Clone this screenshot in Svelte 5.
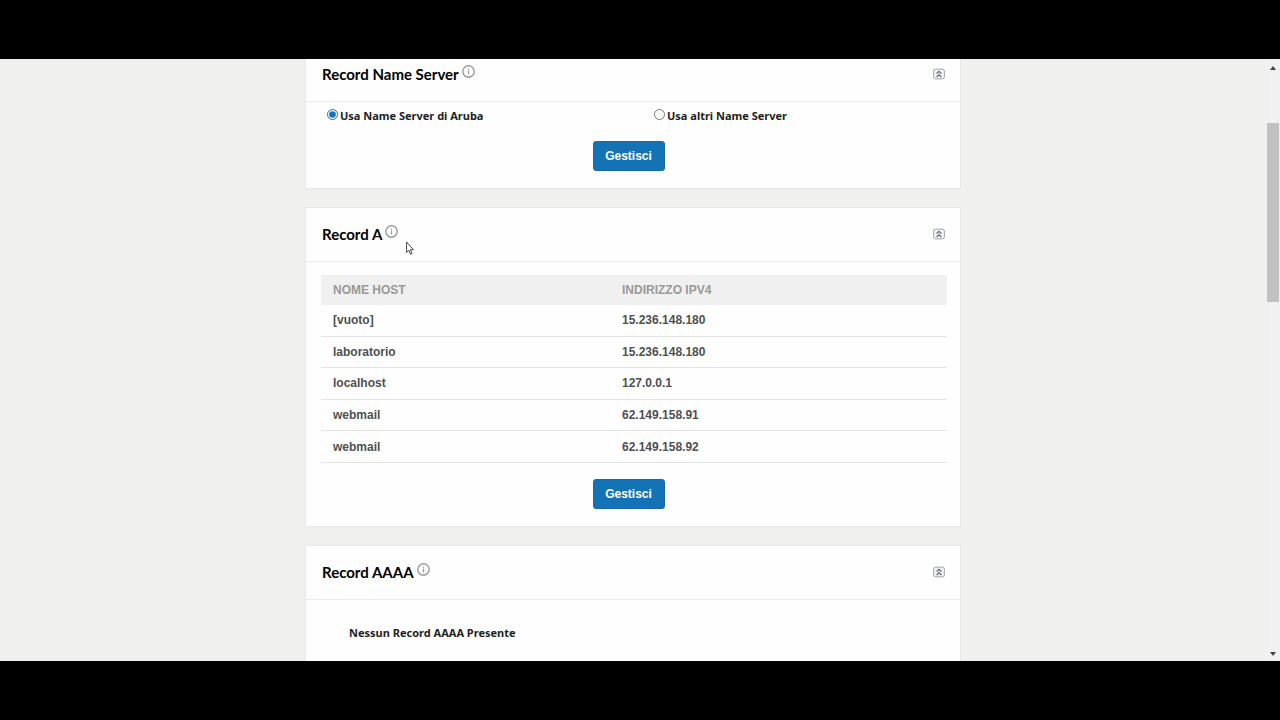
<script lang="ts">
  let nameServer = $state('aruba');

  const columns = ['NOME HOST', 'INDIRIZZO IPV4'];

  const records = [
    { host: '[vuoto]', ip: '15.236.148.180' },
    { host: 'laboratorio', ip: '15.236.148.180' },
    { host: 'localhost', ip: '127.0.0.1' },
    { host: 'webmail', ip: '62.149.158.91' },
    { host: 'webmail', ip: '62.149.158.92' },
  ];
</script>

{#snippet header(title: string)}
  <header class="card-header">
    <h2>{title}</h2>
    <button type="button" class="icon-button info" aria-label="Informazioni">
      <svg width="13" height="13" viewBox="0 0 13 13" fill="none" stroke="#999">
        <circle cx="6.5" cy="6.5" r="5.7" stroke-width="1.4" />
        <path d="M6.5 5.6V9.4M6.5 3.4V4.7" stroke-width="1.2" />
      </svg>
    </button>
    <button type="button" class="icon-button collapse" aria-label="Chiudi sezione">
      <svg width="12" height="12" viewBox="0 0 12 12" fill="none">
        <rect x="0.6" y="1.1" width="10.8" height="9.8" rx="2" fill="#f0f2f4" stroke="#a3a7ac" />
        <path d="M3.6 5.6L6 3.4L8.4 5.6M3.6 8.9L6 6.7L8.4 8.9" stroke="#70757b" stroke-width="1.4" />
      </svg>
    </button>
  </header>
{/snippet}

<div class="stage">
  <div class="screen">
    <main>
      <section class="card">
        {@render header('Record Name Server')}
        <div class="choices">
          <label><input type="radio" name="ns" value="aruba" bind:group={nameServer} />Usa Name Server di Aruba</label>
          <label><input type="radio" name="ns" value="altri" bind:group={nameServer} />Usa altri Name Server</label>
        </div>
        <div class="actions"><button type="button" class="primary">Gestisci</button></div>
      </section>

      <section class="card">
        {@render header('Record A')}
        <div class="table-wrap">
          <table>
            <thead>
              <tr>
                {#each columns as column}
                  <th>{column}</th>
                {/each}
              </tr>
            </thead>
            <tbody>
              {#each records as record}
                <tr>
                  <td>{record.host}</td>
                  <td>{record.ip}</td>
                </tr>
              {/each}
            </tbody>
          </table>
        </div>
        <div class="actions"><button type="button" class="primary">Gestisci</button></div>
      </section>

      <section class="card">
        {@render header('Record AAAA')}
        <p class="empty">Nessun Record AAAA Presente</p>
      </section>
    </main>

    <div class="scrollbar" aria-hidden="true">
      <svg width="6" height="4" viewBox="0 0 6 4"><path d="M0 4L3 0L6 4Z" fill="#444" /></svg>
      <div class="track"><div class="thumb"></div></div>
      <svg width="6" height="4" viewBox="0 0 6 4"><path d="M0 0L3 4L6 0Z" fill="#444" /></svg>
    </div>

    <svg class="cursor" width="8" height="14" viewBox="0 0 8 14" aria-hidden="true">
      <path d="M0.6 1V11.4L2.8 9.3L4.5 13.2L6 12.5L4.4 8.7H7.4Z" fill="#fff" stroke="#333" stroke-width="0.9" />
    </svg>
  </div>
</div>

<style>
  :global(body) { margin: 0; background: #000; }

  .stage { box-sizing: border-box; height: 100vh; padding: 59px 0; background: #000; }
  .screen { position: relative; display: flex; height: 100%; overflow: hidden; background: #f0f0ee; }

  main { flex: 1; display: flex; flex-direction: column; align-items: center; gap: 18px; margin-top: -12px; }

  .card { box-sizing: border-box; width: 100%; max-width: 656px; flex-shrink: 0; padding-bottom: 17px; background: #fefefe; border: 1px solid #e8e8e6; font-family: "Liberation Sans", Arial, sans-serif; }
  .card-header { box-sizing: border-box; display: flex; align-items: center; height: 54px; padding: 0 15px 2px 16px; border-bottom: 1px solid #ebebeb; }
  .card-header h2 { margin: 0; font-family: Lato, sans-serif; font-size: 15px; line-height: 20px; font-weight: 700; color: #000; }

  .icon-button { display: flex; padding: 0; border: none; background: none; cursor: pointer; }
  .info { margin: 0 0 5px 3px; }
  .collapse { margin-left: auto; }

  .choices { display: grid; grid-template-columns: 1fr 1fr; padding-top: 5px; }
  .choices label { display: flex; align-items: center; gap: 2px; padding-left: 21px; }
  .choices input { width: 11px; height: 11px; margin: 0 0 3px; accent-color: #1473c4; }
  .choices label, .empty { font-family: "Noto Sans", sans-serif; font-size: 11px; line-height: 18px; font-weight: 700; color: #222; }

  .actions { display: flex; justify-content: center; padding: 16px 9px 0 0; }
  .primary { width: 72px; height: 30px; padding: 0 0 1px; border: 1px solid #1a68a5; border-radius: 3px; background: #1473b5; color: #fff; font-family: inherit; font-size: 12px; font-weight: 700; cursor: pointer; }

  .table-wrap { padding: 13px 13px 0 15px; }
  table { width: 100%; height: 188px; border-collapse: collapse; table-layout: fixed; font-size: 12px; line-height: 16px; }
  th, td { height: 30px; padding: 0 12px; text-align: left; font-weight: 700; }
  th:first-child { width: 265px; }
  th { background: #f0f0f0; color: #999; }
  td { color: #505050; border-bottom: 1px solid #e4e4e4; }

  .empty { margin: 24px 0 80px 43px; }

  .scrollbar { display: flex; flex-direction: column; align-items: center; width: 14px; box-sizing: border-box; padding: 7px 0 5px; background: #f1f1f1; }
  .track { flex: 1; width: 100%; padding: 53px 1px 0; box-sizing: border-box; }
  .thumb { height: 179px; background: #c1c1c1; }

  .cursor { position: absolute; left: 406px; top: 182px; }
</style>
